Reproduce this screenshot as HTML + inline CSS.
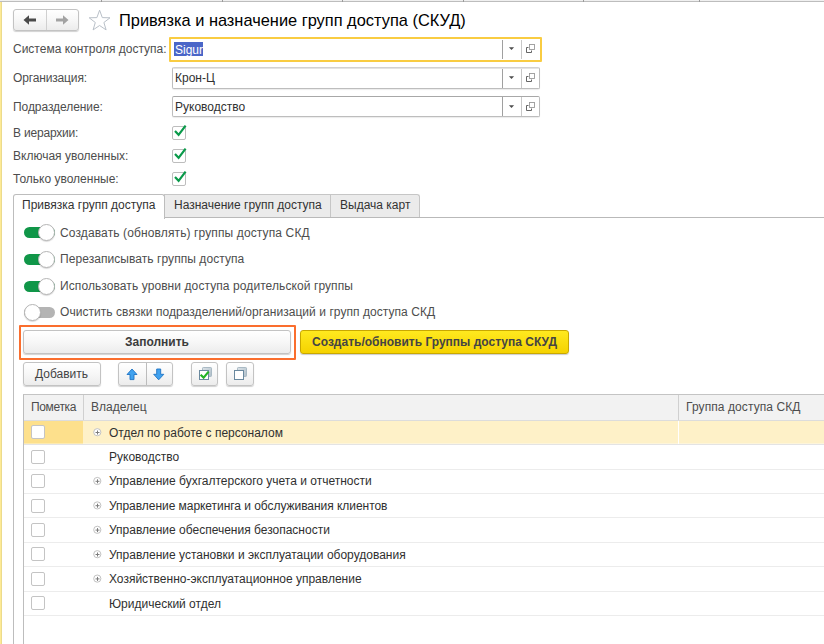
<!DOCTYPE html>
<html><head><meta charset="utf-8">
<style>
*{box-sizing:border-box;margin:0;padding:0}
html,body{width:824px;height:644px;overflow:hidden;background:#fff}
body{position:relative;font-family:"Liberation Sans",sans-serif;font-size:12px;color:#333;}
.abs{position:absolute}
.t{position:absolute;white-space:nowrap;line-height:14px;height:14px}
.lbl{color:#4d4d4d}
.btn{position:absolute;border:1px solid #c3c3c3;border-radius:3px;background:linear-gradient(#ffffff,#f7f7f7 50%,#ececec);box-shadow:0 1px 1px rgba(0,0,0,.18)}
.fld{position:absolute;border:1px solid #bdbdbd;border-top-color:#a8a8a8;border-radius:2px;background:#fff;box-shadow:0 1px 1px rgba(0,0,0,.08)}
.vdiv{position:absolute;width:1px;background:#a0a0a0}
.cb{position:absolute;width:14px;height:14px;border:1px solid #bdbdbd;border-radius:2px;background:#fff}
.rcb{position:absolute;left:31px;width:14px;height:14px;border:1px solid #c4c4c4;border-radius:2px;background:#fff}
.row{position:absolute;left:24px;right:0;height:1px;background:#ececec}
.tog{position:absolute;left:24px;width:32px;height:17px}
.tog .tr{position:absolute;left:0;top:3px;width:31px;height:11px;border-radius:6px;background:#109648}
.tog .kn{position:absolute;left:14px;top:0;width:17px;height:17px;border-radius:50%;background:#fff;border:1px solid #b5b5b5;box-shadow:0 1px 1px rgba(0,0,0,.15)}
.tog.off .tr{background:#b4b4b4}
.tog.off .kn{left:0}
</style></head><body>
<!-- top line -->
<div class="abs" style="left:0;top:0;width:824px;height:1px;background:#f0f0f0"></div>
<div class="abs" style="left:0;top:1px;width:824px;height:1px;background:#bdbdbd"></div>
<div class="abs" style="left:101px;top:0;width:1px;height:2px;background:#9a9a9a"></div>
<div class="abs" style="left:222px;top:0;width:1px;height:2px;background:#9a9a9a"></div>
<div class="abs" style="left:342px;top:0;width:1px;height:2px;background:#9a9a9a"></div>
<div class="abs" style="left:463px;top:0;width:1px;height:2px;background:#9a9a9a"></div>
<div class="abs" style="left:583px;top:0;width:1px;height:2px;background:#9a9a9a"></div>
<div class="abs" style="left:699px;top:0;width:1px;height:2px;background:#9a9a9a"></div>
<!-- left yellow strip -->
<div class="abs" style="left:0;top:2px;width:1px;height:642px;background:#fdea96"></div>
<div class="abs" style="left:1px;top:2px;width:1px;height:642px;background:#ecdb8c"></div>

<!-- nav buttons -->
<div class="btn" style="left:13px;top:9px;width:66px;height:22px"></div>
<div class="abs" style="left:46px;top:10px;width:1px;height:20px;background:#d0d0d0"></div>
<svg class="abs" style="left:22px;top:14px" width="16" height="12" viewBox="0 0 16 12"><path d="M1.5 6 L7 1.2 L7 4.6 L14 4.6 L14 7.4 L7 7.4 L7 10.8 Z" fill="#4a4a4a"/></svg>
<svg class="abs" style="left:54px;top:14px" width="16" height="12" viewBox="0 0 16 12"><path d="M14.5 6 L9 1.2 L9 4.6 L2 4.6 L2 7.4 L9 7.4 L9 10.8 Z" fill="#a3a3a3"/></svg>
<!-- star -->
<svg class="abs" style="left:88px;top:9px" width="24" height="23" viewBox="0 0 24 23"><path d="M11.6 1.2 L14.3 8.6 L22 8.8 L15.9 13.5 L18.1 20.9 L11.6 16.5 L5.1 20.9 L7.3 13.5 L1.2 8.8 L8.9 8.6 Z" fill="#fff" stroke="#b9c0c8" stroke-width="1"/></svg>
<div class="t" style="left:119px;top:10px;font-size:16.4px;line-height:20px;height:20px;color:#000">Привязка и назначение групп доступа (СКУД)</div>

<!-- field 1 -->
<div class="t lbl" style="left:13px;top:42px">Система контроля доступа:</div>
<div class="abs" style="left:169px;top:37px;width:373px;height:25px;border:2px solid #f9cc42;border-radius:1px;background:#fff"></div>
<div class="abs" style="left:174px;top:42px;width:29px;height:14px;background:#4a66c8"></div>
<div class="t" style="left:175px;top:42px;color:#fff;transform:translateY(0.6px)">Sigur</div>
<div class="vdiv" style="left:502px;top:40px;height:19px"></div>
<div class="vdiv" style="left:521px;top:40px;height:19px;background:#c8c8c8"></div>
<!-- field 2 -->
<div class="t lbl" style="left:13px;top:71px;letter-spacing:-0.15px">Организация:</div>
<div class="fld" style="left:172px;top:67px;width:368px;height:22px;border-top-color:#d2d2d2"></div><div class="abs" style="left:173px;top:68px;width:366px;height:1px;background:#e4e4e4"></div>
<div class="t" style="left:175px;top:71px;color:#303030">Крон-Ц</div>
<div class="vdiv" style="left:502px;top:69px;height:19px"></div>
<div class="vdiv" style="left:521px;top:69px;height:19px;background:#c8c8c8"></div>
<!-- field 3 -->
<div class="t lbl" style="left:13px;top:100px;letter-spacing:-0.07px">Подразделение:</div>
<div class="fld" style="left:172px;top:96px;width:368px;height:21px"></div>
<div class="t" style="left:175px;top:100px;color:#303030">Руководство</div>
<div class="vdiv" style="left:502px;top:97px;height:19px"></div>
<div class="vdiv" style="left:521px;top:97px;height:19px;background:#c8c8c8"></div>

<!-- dropdown arrows + open icons -->
<svg class="abs" style="left:508px;top:46px" width="8" height="5" viewBox="0 0 8 5"><path d="M0.9 1.2 L6.1 1.2 L3.5 4.1 Z" fill="#4d4d4d"/></svg>
<svg class="abs" style="left:508px;top:75px" width="8" height="5" viewBox="0 0 8 5"><path d="M0.9 1.2 L6.1 1.2 L3.5 4.1 Z" fill="#4d4d4d"/></svg>
<svg class="abs" style="left:508px;top:104px" width="8" height="5" viewBox="0 0 8 5"><path d="M0.9 1.2 L6.1 1.2 L3.5 4.1 Z" fill="#4d4d4d"/></svg>
<svg class="abs" style="left:525px;top:44px" width="11" height="10" viewBox="0 0 11 10"><path d="M3.5 3.5 H1.5 V8.5 H6.5 V6.5" fill="none" stroke="#555" stroke-width="0.9"/><rect x="4.5" y="0.5" width="5" height="5" fill="#fff" stroke="#9a9a9a" stroke-width="0.9"/></svg>
<svg class="abs" style="left:525px;top:73px" width="11" height="10" viewBox="0 0 11 10"><path d="M3.5 3.5 H1.5 V8.5 H6.5 V6.5" fill="none" stroke="#555" stroke-width="0.9"/><rect x="4.5" y="0.5" width="5" height="5" fill="#fff" stroke="#9a9a9a" stroke-width="0.9"/></svg>
<svg class="abs" style="left:525px;top:102px" width="11" height="10" viewBox="0 0 11 10"><path d="M3.5 3.5 H1.5 V8.5 H6.5 V6.5" fill="none" stroke="#555" stroke-width="0.9"/><rect x="4.5" y="0.5" width="5" height="5" fill="#fff" stroke="#9a9a9a" stroke-width="0.9"/></svg>

<!-- checkboxes -->
<div class="t lbl" style="left:13px;top:126px;letter-spacing:-0.19px">В иерархии:</div>
<div class="t lbl" style="left:13px;top:149px">Включая уволенных:</div>
<div class="t lbl" style="left:13px;top:172px">Только уволенные:</div>
<div class="cb" style="left:172px;top:126px"></div>
<div class="cb" style="left:172px;top:149px"></div>
<div class="cb" style="left:172px;top:172px"></div>
<svg class="abs" style="left:172px;top:123px" width="16" height="16" viewBox="0 0 16 16"><path d="M3 8 L6.6 11.8 L13.6 2.6" fill="none" stroke="#0a9a4a" stroke-width="2.2"/></svg>
<svg class="abs" style="left:172px;top:146px" width="16" height="16" viewBox="0 0 16 16"><path d="M3 8 L6.6 11.8 L13.6 2.6" fill="none" stroke="#0a9a4a" stroke-width="2.2"/></svg>
<svg class="abs" style="left:172px;top:169px" width="16" height="16" viewBox="0 0 16 16"><path d="M3 8 L6.6 11.8 L13.6 2.6" fill="none" stroke="#0a9a4a" stroke-width="2.2"/></svg>

<!-- tabs -->
<div class="abs" style="left:164px;top:194px;width:256px;height:24px;background:#ebebeb;border:1px solid #c6c6c6;border-bottom:none;border-radius:0 3px 0 0"></div>
<div class="abs" style="left:330px;top:195px;width:1px;height:22px;background:#c6c6c6"></div>
<div class="abs" style="left:13px;top:217px;width:811px;height:1px;background:#b9b9b9"></div>
<div class="abs" style="left:13px;top:194px;width:152px;height:25px;background:#fff;border:1px solid #bdbdbd;border-bottom:none;border-radius:3px 3px 0 0"></div>
<div class="abs" style="left:13px;top:218px;width:1px;height:426px;background:#bdbdbd"></div>
<div class="t" style="left:22px;top:198px;color:#333">Привязка групп доступа</div>
<div class="t" style="left:174px;top:198px;color:#333">Назначение групп доступа</div>
<div class="t" style="left:340px;top:198px;color:#333">Выдача карт</div>

<!-- toggles -->
<div class="tog" style="top:224px"><div class="tr"></div><div class="kn"></div></div>
<div class="tog" style="top:251px"><div class="tr"></div><div class="kn"></div></div>
<div class="tog" style="top:278px"><div class="tr"></div><div class="kn"></div></div>
<div class="tog off" style="top:304px"><div class="tr"></div><div class="kn"></div></div>
<div class="t lbl" style="left:60px;top:226px;letter-spacing:0.123px">Создавать (обновлять) группы доступа СКД</div>
<div class="t lbl" style="left:60px;top:252px;letter-spacing:0.062px">Перезаписывать группы доступа</div>
<div class="t lbl" style="left:60px;top:279px;letter-spacing:0.086px">Использовать уровни доступа родительской группы</div>
<div class="t lbl" style="left:60px;top:305px;letter-spacing:0.053px">Очистить связки подразделений/организаций и групп доступа СКД</div>

<!-- big buttons -->
<div class="abs" style="left:19px;top:325px;width:277px;height:35px;border:2px solid #fa6e2e;border-radius:1px"></div>
<div class="btn" style="left:23px;top:330px;width:268px;height:24px"></div>
<div class="t" style="left:23px;width:268px;top:335px;text-align:center;font-weight:bold;color:#3c3c3c">Заполнить</div>
<div class="abs" style="left:300px;top:330px;width:269px;height:24px;border:1px solid #c9a800;border-radius:3px;background:linear-gradient(#ffe91f,#f5d200);box-shadow:0 1px 1px rgba(0,0,0,.2)"></div>
<div class="t" style="left:300px;width:269px;top:335px;text-align:center;font-weight:bold;color:#444">Создать/обновить Группы доступа СКУД</div>

<!-- toolbar -->
<div class="btn" style="left:23px;top:362px;width:78px;height:24px"></div>
<div class="t" style="left:23px;width:77px;top:367px;text-align:center;color:#444">Добавить</div>
<div class="btn" style="left:118px;top:362px;width:55px;height:24px"></div>
<div class="abs" style="left:146px;top:363px;width:1px;height:22px;background:#bcbcbc"></div>
<svg class="abs" style="left:124px;top:366px" width="16" height="16" viewBox="124 366 16 16"><path d="M132 369 L137 374.5 L134 374.5 L134 379.6 L130 379.6 L130 374.5 L127 374.5 Z" fill="#41a2ef" stroke="#1f74c4" stroke-width="0.9" stroke-linejoin="round"/></svg>
<svg class="abs" style="left:151px;top:366px" width="16" height="16" viewBox="151 366 16 16"><path d="M158.7 379.8 L163.8 374.3 L160.7 374.3 L160.7 369 L156.7 369 L156.7 374.3 L153.7 374.3 Z" fill="#41a2ef" stroke="#1f74c4" stroke-width="0.9" stroke-linejoin="round"/></svg>
<div class="btn" style="left:191px;top:362px;width:27px;height:24px"></div>
<div class="btn" style="left:226px;top:362px;width:28px;height:24px"></div>
<svg class="abs" style="left:196px;top:364px" width="20" height="20" viewBox="196 364 20 20"><defs><linearGradient id="g1" x1="0" y1="0" x2="1" y2="1"><stop offset="0" stop-color="#dce3e8"/><stop offset="1" stop-color="#aebdc8"/></linearGradient></defs><rect x="202.5" y="367.5" width="9" height="9" rx="0.8" fill="url(#g1)" stroke="#a3b4c0" stroke-width="0.9"/><rect x="199.5" y="370.5" width="9" height="9" fill="#fff" stroke="#6a899f" stroke-width="1"/><path d="M200.6 374.8 L203.6 377.6 L208.6 371.6" fill="none" stroke="#22b424" stroke-width="2.2"/></svg>
<svg class="abs" style="left:231px;top:364px" width="20" height="20" viewBox="231 364 20 20"><rect x="237.5" y="367.5" width="9" height="9" rx="0.8" fill="url(#g1)" stroke="#a3b4c0" stroke-width="0.9"/><rect x="234.5" y="370.5" width="9" height="9" fill="#fff" stroke="#6a899f" stroke-width="1"/></svg>

<!-- table -->
<div class="abs" style="left:23px;top:394px;width:801px;height:250px;border-left:1px solid #bdbdbd;border-top:1px solid #c4c4c4;background:#fff"></div>
<div class="abs" style="left:24px;top:395px;width:800px;height:25px;background:#f2f2f2"></div>
<div class="abs" style="left:24px;top:420px;width:800px;height:1px;background:#dcdcdc"></div>
<div class="abs" style="left:83px;top:395px;width:1px;height:25px;background:#d0d0d0"></div>
<div class="abs" style="left:678px;top:395px;width:1px;height:25px;background:#d0d0d0"></div>
<div class="t lbl" style="left:31px;top:400px;letter-spacing:-0.35px">Пометка</div>
<div class="t lbl" style="left:91px;top:400px">Владелец</div>
<div class="t lbl" style="left:686px;top:400px;letter-spacing:0.09px">Группа доступа СКД</div>
<!-- selected row -->
<div class="abs" style="left:24px;top:421px;width:59px;height:23px;background:linear-gradient(#fde08c 0,#fde08c 22px,#fdeab0 22px)"></div>
<div class="abs" style="left:83px;top:421px;width:741px;height:23px;background:linear-gradient(#fef1c8 0,#fef1c8 22px,#fdf5db 22px)"></div>
<div class="abs" style="left:678px;top:421px;width:1px;height:23px;background:#fff"></div>
<div class="row" style="top:444px;background:#e4e4e4"></div>
<div class="row" style="top:469px"></div>
<div class="row" style="top:493px"></div>
<div class="row" style="top:517px"></div>
<div class="row" style="top:542px"></div>
<div class="row" style="top:566px"></div>
<div class="row" style="top:591px"></div>
<div class="row" style="top:615px"></div>

<div class="rcb" style="top:425px"></div>
<div class="rcb" style="top:450px"></div>
<div class="rcb" style="top:474px"></div>
<div class="rcb" style="top:499px"></div>
<div class="rcb" style="top:523px"></div>
<div class="rcb" style="top:547px"></div>
<div class="rcb" style="top:572px"></div>
<div class="rcb" style="top:596px"></div>

<div class="t" style="left:109px;top:426px;color:#303030">Отдел по работе с персоналом</div>
<div class="t" style="left:109px;top:450px;color:#303030">Руководство</div>
<div class="t" style="left:109px;top:474px;color:#303030">Управление бухгалтерского учета и отчетности</div>
<div class="t" style="left:109px;top:499px;color:#303030;letter-spacing:-0.045px">Управление маркетинга и обслуживания клиентов</div>
<div class="t" style="left:109px;top:523px;color:#303030">Управление обеспечения безопасности</div>
<div class="t" style="left:109px;top:548px;color:#303030">Управление установки и эксплуатации оборудования</div>
<div class="t" style="left:109px;top:572px;color:#303030">Хозяйственно-эксплуатационное управление</div>
<div class="t" style="left:109px;top:597px;color:#303030">Юридический отдел</div>

<svg class="abs" style="left:91px;top:426px" width="12" height="12" viewBox="0 0 12 12"><circle cx="6.3" cy="6.20" r="3.6" fill="#fff" stroke="#c2c2c2" stroke-width="1"/><path d="M4.5 6.50 H8.5 M6.5 4.50 V8.50" stroke="#7c7c7c" stroke-width="1"/></svg>
<svg class="abs" style="left:91px;top:475px" width="12" height="12" viewBox="0 0 12 12"><circle cx="6.3" cy="6.00" r="3.6" fill="#fff" stroke="#c2c2c2" stroke-width="1"/><path d="M4.5 6.30 H8.5 M6.5 4.30 V8.30" stroke="#7c7c7c" stroke-width="1"/></svg>
<svg class="abs" style="left:91px;top:499px" width="12" height="12" viewBox="0 0 12 12"><circle cx="6.3" cy="6.40" r="3.6" fill="#fff" stroke="#c2c2c2" stroke-width="1"/><path d="M4.5 6.70 H8.5 M6.5 4.70 V8.70" stroke="#7c7c7c" stroke-width="1"/></svg>
<svg class="abs" style="left:91px;top:523px" width="12" height="12" viewBox="0 0 12 12"><circle cx="6.3" cy="6.80" r="3.6" fill="#fff" stroke="#c2c2c2" stroke-width="1"/><path d="M4.5 7.10 H8.5 M6.5 5.10 V9.10" stroke="#7c7c7c" stroke-width="1"/></svg>
<svg class="abs" style="left:91px;top:548px" width="12" height="12" viewBox="0 0 12 12"><circle cx="6.3" cy="6.20" r="3.6" fill="#fff" stroke="#c2c2c2" stroke-width="1"/><path d="M4.5 6.50 H8.5 M6.5 4.50 V8.50" stroke="#7c7c7c" stroke-width="1"/></svg>
<svg class="abs" style="left:91px;top:572px" width="12" height="12" viewBox="0 0 12 12"><circle cx="6.3" cy="6.60" r="3.6" fill="#fff" stroke="#c2c2c2" stroke-width="1"/><path d="M4.5 6.90 H8.5 M6.5 4.90 V8.90" stroke="#7c7c7c" stroke-width="1"/></svg>
</body></html>
